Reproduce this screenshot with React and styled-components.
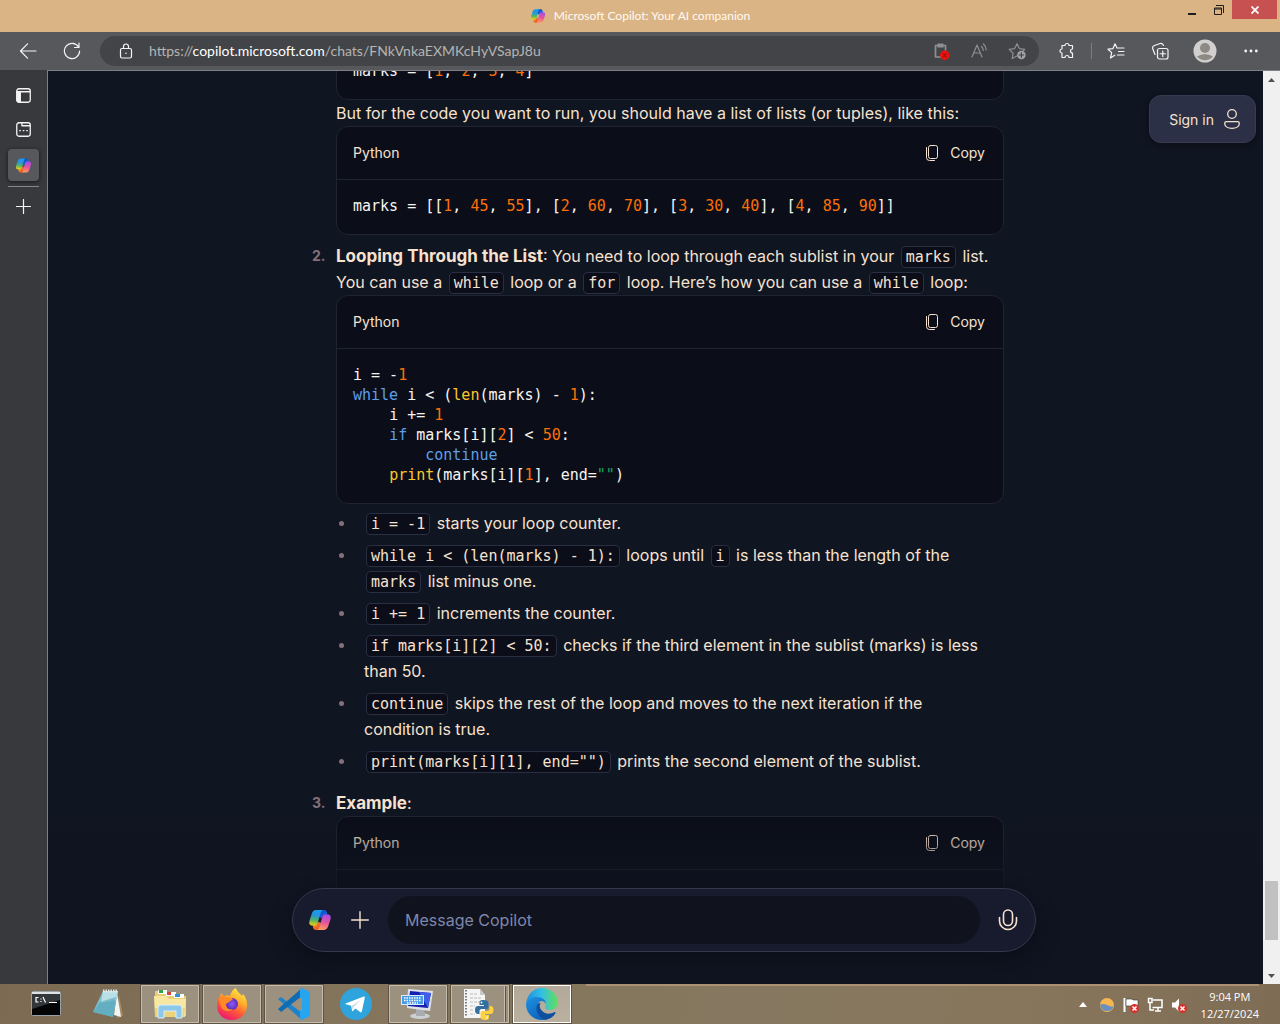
import React, { useId, useLayoutEffect, useRef } from "react";
import styled, { createGlobalStyle, css } from "styled-components";

const UI = `"Open Sans", "Noto Sans", sans-serif`;
const FRAME = `Lato, "Open Sans", sans-serif`;
const CHAT = `Inter, "Noto Sans", sans-serif`;
const MONO = `"DejaVu Sans Mono", "Liberation Mono", monospace`;

const Global = createGlobalStyle`
  *, *::before, *::after { box-sizing: border-box; }
  body { margin: 0; background: #0f1521; }
  button, input { font: inherit; color: inherit; border: 0; background: none; padding: 0; }
  ol, ul, p, pre { margin: 0; padding: 0; list-style: none; }
  svg { display: block; flex: none; }
`;

/* ---------- window frame ---------- */
const Desktop = styled.div`
  display: flex;
  flex-direction: column;
  height: 100vh;
  overflow: hidden;
  font-family: ${UI};
`;
const TitleBar = styled.header`
  display: grid;
  grid-template-columns: 1fr auto 1fr;
  height: 32px;
  background: #dbb486;
`;
const WindowTitle = styled.div`
  grid-column: 2;
  display: flex;
  align-items: center;
  gap: 8px;
  font: 12px/32px ${FRAME};
  color: #fffaf2;
`;
const WindowButtons = styled.div`
  display: flex;
  justify-content: flex-end;
  padding-right: 3px;
`;
const WindowButton = styled.button`
  display: grid;
  place-items: center;
  width: ${(p) => (p.$close ? 45 : 27)}px;
  height: 19px;
  background: ${(p) => (p.$close ? "#c75050" : "transparent")};
`;

/* ---------- browser toolbar ---------- */
const Toolbar = styled.nav`
  display: flex;
  align-items: center;
  height: 38px;
  padding: 0 6px;
  background: #56585c;
  color: #f4f4f4;
`;
const ToolButton = styled.button`
  display: grid;
  place-items: center;
  width: ${(p) => (p.$wide ? 46 : 44)}px;
  height: 30px;
`;
const ToolDivider = styled.span`
  width: 1px;
  height: 16px;
  margin: 0 2px;
  background: #7d7e82;
`;
const AddressBar = styled.div`
  display: flex;
  flex: 1;
  align-items: center;
  gap: 15px;
  min-width: 0;
  height: 30px;
  margin: 0 6px;
  padding: 0 13px 0 18px;
  border-radius: 15px;
  background: #434447;
`;
const Url = styled.div`
  flex: 1;
  min-width: 0;
  overflow: hidden;
  white-space: nowrap;
  font: 14px/20px ${FRAME};
  color: #b4b4b4;
  outline: none;
`;
const Host = styled.span`
  color: #fff;
`;
const AddressActions = styled.div`
  display: flex;
  gap: 20px;
  color: #8e8f91;
`;

/* ---------- page area ---------- */
const Main = styled.div`
  display: flex;
  flex: 1;
  min-height: 0;
`;
const Sidebar = styled.aside`
  display: flex;
  flex-direction: column;
  align-items: center;
  width: 47px;
  padding-top: 8px;
  background: #38393c;
  color: #f4f4f4;
`;
const SideButton = styled.button`
  display: grid;
  place-items: center;
  width: 31px;
  height: 34px;
  ${(p) =>
    p.$active &&
    css`
      height: 32px;
      margin: 3px 0 5px;
      border-radius: 4px;
      background: #56585c;
      box-shadow: 0 1px 4px #0009;
    `}
`;
const SideDivider = styled.span`
  width: 31px;
  height: 1px;
  margin-bottom: 2px;
  background: #85868a;
`;
const Page = styled.div`
  display: flex;
  flex: 1;
  min-width: 0;
  border: solid #7d7f83;
  border-width: 1px 0 0 1px;
  background: #0f1521;
`;
const ChatArea = styled.main`
  position: relative;
  flex: 1;
  min-width: 0;
  color: #f7e2d0;
  font-family: ${CHAT};
`;
const Scroller = styled.div`
  height: 100%;
  padding-left: 17px;
  overflow-y: auto;
  scrollbar-width: none;
`;
const Column = styled.ol`
  display: flex;
  flex-direction: column;
  gap: 8px;
  max-width: 744px;
  margin: 0 auto;
  padding: 0 32px 200px 20px;
  font-size: 16px;
  line-height: 26px;
`;
const Item = styled.li`
  display: grid;
  grid-template-columns: 24px minmax(0, 1fr);
`;
const Marker = styled.span`
  font-size: 14px;
  font-weight: 700;
  color: #85707a;
`;
const Strong = styled.strong`
  font-size: 17px;
  font-weight: 700;
  line-height: 1;
`;
const Code = styled.code`
  margin: 0 2px;
  padding: 1px 4px;
  border: 1px solid #2a2e42;
  border-radius: 4px;
  background: #0b0e19;
  font: 15px/1 ${MONO};
`;
const Bullets = styled.ul`
  display: flex;
  flex-direction: column;
  gap: 6px;
  padding: 6px 0 8px;
`;
const Bullet = styled.li`
  display: grid;
  grid-template-columns: 28px minmax(0, 1fr);
  padding-right: 16px;
  &::before {
    content: "";
    width: 5px;
    height: 5px;
    margin: 11px 3px 0;
    border-radius: 50%;
    background: #85707a;
  }
`;

const Block = styled.section`
  border: 1px solid #1f2332;
  border-radius: 12px;
  background: #0b0e19;
`;
const BlockHead = styled.div`
  display: flex;
  align-items: center;
  justify-content: space-between;
  height: 53px;
  padding: 0 18px 0 16px;
  border-bottom: 1px solid #1f2332;
  font-size: 14px;
`;
const CopyButton = styled.button`
  display: flex;
  align-items: center;
  gap: 10px;
`;
const Pre = styled.pre`
  min-height: 54px;
  padding: 16px 16px 18px;
  font: 15px/20px ${MONO};
  color: #f8f5f0;
`;
const tokenColors = { num: "#fb7008", key: "#5f9fe6", fn: "#fdc62e", str: "#1aa35c" };
const Token = styled.span`
  color: ${(p) => tokenColors[p.$kind]};
`;

const SignIn = styled.button`
  position: absolute;
  top: 24px;
  right: 7px;
  display: flex;
  align-items: center;
  gap: 10px;
  height: 48px;
  padding: 0 15px 0 19px;
  border: 1px solid #363b52;
  border-radius: 12px;
  background: #2b3047;
  box-shadow: 0 2px 6px #0005;
  font-size: 14px;
`;
const ComposerDock = styled.div`
  position: absolute;
  inset: auto 0 0 0;
  display: flex;
  justify-content: center;
  padding: 72px 0 32px 17px;
  background: linear-gradient(#0f142000, #0f1420 96px);
`;
const Composer = styled.form`
  display: flex;
  align-items: center;
  gap: 8px;
  width: 100%;
  max-width: 744px;
  height: 64px;
  padding: 7px 7px 7px 15px;
  border: 1px solid #333749;
  border-radius: 32px;
  background: #171b2d;
  box-shadow: 0 8px 20px #0a0c1499;
`;
const ComposerButton = styled.button`
  display: grid;
  place-items: center;
  width: ${(p) => (p.$logo ? 24 : 40)}px;
  height: 40px;
`;
const MessageInput = styled.input`
  flex: 1;
  min-width: 0;
  height: 48px;
  padding: 0 17px;
  border-radius: 24px;
  background: #10131e;
  font-size: 16px;
  &::placeholder {
    color: #7f86ab;
    opacity: 1;
  }
`;

/* ---------- scrollbar ---------- */
const ScrollBar = styled.div`
  display: flex;
  flex-direction: column;
  width: 17px;
  background: #f0f0f0;
`;
const ScrollArrow = styled.button`
  display: grid;
  place-items: center;
  height: 17px;
`;
const Track = styled.div`
  display: flex;
  flex: 1;
  align-items: flex-end;
  padding: 0 2px 27px;
`;
const Thumb = styled.div`
  flex: 1;
  height: 59px;
  background: #c1c1c1;
`;

/* ---------- taskbar ---------- */
const TaskBar = styled.footer`
  display: flex;
  align-items: stretch;
  height: 40px;
  padding: 1px 21px 1px 17px;
  background: linear-gradient(100deg, #7c6a52 0%, #84755c 30%, #867860 60%, #87765c 80%, #7f6c55 100%);
  color: #fff;
`;
const Apps = styled.div`
  display: flex;
  gap: 4px;
`;
const AppButton = styled.button`
  display: grid;
  place-items: center;
  width: 58px;
  ${(p) =>
    p.$open &&
    css`
      border: 1px solid #c4bcac;
      background: #9c907e;
      outline: 1px solid #5f5443;
      outline-offset: 0;
    `}
  ${(p) =>
    p.$active &&
    css`
      border-color: #fff;
      background: linear-gradient(#b3a99a, #b9b0a0);
    `}
  ${(p) =>
    p.$stacked &&
    css`
      background: linear-gradient(90deg, #9c907e 52px, #c4bcac 52px 53px, #5f5443 53px 54px, #9c907e 54px);
      padding-right: 4px;
    `}
`;
const Tray = styled.div`
  display: flex;
  flex: 1;
  align-items: center;
  justify-content: flex-end;
  gap: 8px;
  margin: -1px 0 0 15px;
  border-top: 2px solid #ab9073;
`;
const TrayButton = styled.button`
  display: grid;
  place-items: center;
  width: 16px;
  height: 16px;
`;
const Clock = styled.time`
  padding-left: 6px;
  text-align: center;
  font-size: 11px;
  line-height: 17px;
`;

/* ---------- drawings ---------- */
const stroke = { fill: "none", stroke: "currentColor", strokeWidth: 1.2, strokeLinecap: "round", strokeLinejoin: "round" };
const Line = ({ size = 18, box = 18, children, ...rest }) => (
  <svg width={size} height={size} viewBox={`0 0 ${box} ${box}`} {...stroke} {...rest} aria-hidden="true">
    {children}
  </svg>
);

function CopilotLogo({ size }) {
  const id = useId();
  return (
    <svg width={size} height={size} viewBox="0 0 24 24" aria-hidden="true">
      <defs>
        <linearGradient id={id + "a"} x1="0.4" y1="0" x2="0.3" y2="1">
          <stop offset="0" stopColor="#159cf0" />
          <stop offset="0.35" stopColor="#2b93d8" />
          <stop offset="0.65" stopColor="#4fb56b" />
          <stop offset="1" stopColor="#f2cc10" />
        </linearGradient>
        <linearGradient id={id + "b"} x1="0.6" y1="0" x2="0.4" y2="1">
          <stop offset="0" stopColor="#a44bea" />
          <stop offset="0.5" stopColor="#e5559c" />
          <stop offset="1" stopColor="#ff9a5c" />
        </linearGradient>
        <linearGradient id={id + "c"} x1="0" y1="0" x2="1" y2="1">
          <stop offset="0" stopColor="#0a3fc0" />
          <stop offset="1" stopColor="#1b7ae8" />
        </linearGradient>
        <linearGradient id={id + "d"} x1="0" y1="0" x2="1" y2="1">
          <stop offset="0" stopColor="#f7a325" />
          <stop offset="1" stopColor="#e8402c" />
        </linearGradient>
      </defs>
      <path d="M12 2h4.300c1.500 0 2.100.9 2.500 2.200l.9 3.800h-3.200c-1.500 0-2.300.8-2.800 2.300L11 9z" fill={`url(#${id}c)`} />
      <path d="M12 22H7.700c-1.500 0-2.100-.9-2.500-2.200L4.300 16h3.200c1.500 0 2.300-.8 2.800-2.300L13 15z" fill={`url(#${id}d)`} />
      <path d="M15 2H8C5.600 2 4.500 3.600 3.700 5.900L1.600 12.400C.6 15.600 1.700 17.500 4.500 17.500h2.500c1.500 0 2.200-1 2.700-2.600L12.500 5.500C13 3.600 13.700 2.300 15 2z" fill={`url(#${id}a)`} />
      <path d="M9 22H16c2.400 0 3.500-1.600 4.300-3.900l2.100-6.500c1-3.200-.1-5.100-2.900-5.100h-2.500c-1.500 0-2.200 1-2.700 2.600L11.500 18.500C11 20.400 10.300 21.700 9 22z" fill={`url(#${id}b)`} />
    </svg>
  );
}

const CopyIcon = () => (
  <Line size={16} box={16} strokeWidth="1">
    <rect x="4.500" y="0.500" width="9" height="13" rx="2" />
    <path d="M2.500 2.500v10a3 3 0 0 0 3 3h5" />
  </Line>
);

const CmdIcon = () => (
  <svg width="30" height="26" viewBox="0 0 30 26" aria-hidden="true">
    <rect x="0.500" y="0.500" width="29" height="24" rx="1" fill="#050505" stroke="#98a0a8" />
    <path d="M1 1h28v2H1z" fill="#dce2e6" />
    <path d="M1 3h28v6L1 18z" fill="#33373a" />
    <path d="M7.500 6.500H5v4.500h2.500M10 7.500v1M10 10v1M12 6l2.500 5.500M18 11.500h8" stroke="#fff" strokeWidth="1.200" fill="none" />
  </svg>
);
const NotepadIcon = () => (
  <svg width="32" height="32" viewBox="0 0 32 32" aria-hidden="true">
    <path d="M27 7l4 21-6 2z" fill="#a88c5c" />
    <path d="M25 5l4 24-7-2z" fill="#f0f5f7" />
    <path d="M11 3h15l-5 26-20-5z" fill="#7fc1cf" />
    <path d="M11 3h15l-2 9-15 3z" fill="#b9e0e6" />
    <path d="M8 14l16-5-3 20-20-5z" fill="#4c9fb4" opacity=".55" />
    <path d="M11 3h15" stroke="#e3eaec" strokeWidth="3" strokeDasharray="1.500 1" />
  </svg>
);
const FolderIcon = () => (
  <svg width="34" height="32" viewBox="0 0 34 32" aria-hidden="true">
    <path d="M2 3h10l2 3h11l1 2h7v20H2z" fill="#e9cf73" />
    <path d="M5 2h9v4H5z" fill="#fff" />
    <path d="M6 2h4v3H6z" fill="#27a844" />
    <path d="M13 4h10v4H13z" fill="#fff" />
    <path d="M14 4h4v3h-4z" fill="#d54536" />
    <path d="M21 6h10v4H21z" fill="#fff" />
    <path d="M22 6h5v3h-5z" fill="#2f8fd8" />
    <path d="M1 8h12l3 3h17l-1 18H2z" fill="#f8e7a0" />
    <path d="M2 20h30l-1 9H2z" fill="#ecd27a" />
    <path d="M5 30V20q0-3 3-3h18q3 0 3 3v10h-6v-7H11v7z" fill="#8cc8ea" stroke="#d8effa" />
  </svg>
);
function FirefoxIcon() {
  return (
    <svg width="32" height="32" viewBox="0 0 32 32" aria-hidden="true">
      <defs>
        <linearGradient id="ff1" x1="0.800" y1="0" x2="0.300" y2="1">
          <stop offset="0" stopColor="#fff04a" />
          <stop offset="0.350" stopColor="#ffb12c" />
          <stop offset="0.650" stopColor="#ff5a35" />
          <stop offset="1" stopColor="#ed1374" />
        </linearGradient>
        <radialGradient id="ff2">
          <stop offset="0" stopColor="#8f5cf0" />
          <stop offset="1" stopColor="#5b2bc0" />
        </radialGradient>
      </defs>
      <path d="M20 0c1 4 4 5 6 8l1-2c3 3 4 7 4 11 0 8-6 15-15 15S1 26 1 17c0-4 1-7 3-9l1-3 3 3c2-1 4-1 6 0 1-4 3-7 6-8z" fill="url(#ff1)" />
      <circle cx="16" cy="16" r="6" fill="url(#ff2)" />
      <path d="M3 11c2-3 5-3 8-1 2-1 5-1 6 2-2 0-3 1-4 2s-2 1-3 2c-1 4 3 6 7 5-4 4-11 2-12-3-1-3-2-5-2-7z" fill="#ff8a25" />
    </svg>
  );
}
const CodeIcon = () => (
  <svg width="32" height="32" viewBox="0 0 32 32" aria-hidden="true">
    <path d="M0 11l3-2 21 16v7z" fill="#1b83cc" />
    <path d="M0 21l3 3L24 8V0z" fill="#0d6cb2" />
    <path d="M24 0l8 4v24l-8 4-2-1V1z" fill="#27a5f0" />
    <path d="M24 9v14l-9-7z" fill="#9c907e" />
  </svg>
);
const TelegramIcon = () => (
  <svg width="32" height="32" viewBox="0 0 32 32" aria-hidden="true">
    <circle cx="16" cy="16" r="16" fill="#2fa3dc" />
    <path d="M5.500 15.500L23.800 8.500q1.200-.3 1 1.200l-3 13.800q-.4 1.400-1.700.6l-4.700-3.500-2.500 2.400q-.8.600-.9-.5l-.8-4.700-5.300-1.600q-1-.4-.4-.7z" fill="#fff" />
    <path d="M11.500 18l9.500-6.300-7.500 7.300-.4 3.800z" fill="#c4dcea" />
  </svg>
);
const ComputerIcon = () => (
  <svg width="34" height="32" viewBox="0 0 34 32" aria-hidden="true">
    <ellipse cx="19" cy="28" rx="10" ry="3" fill="#cdd0d3" />
    <path d="M15 20h8l1 8h-9z" fill="#a9adb2" />
    <path d="M7 1l25 2-3 20-23-3z" fill="#dfe3e8" />
    <path d="M9 3l21 2-3 15-20-2z" fill="#1520b0" />
    <path d="M18 4l12 1-3 15z" fill="#3f5fe8" />
    <rect x="0.500" y="7.500" width="22" height="9" fill="#4a9be8" stroke="#d6ebfc" />
    <path d="M3 10h17M3 12.500h17M6 15h11" stroke="#fff" strokeWidth="1.300" strokeDasharray="1.500 1" />
  </svg>
);
const PythonIcon = () => (
  <svg width="32" height="32" viewBox="0 0 32 32" aria-hidden="true">
    <path d="M2 1h16l5 6v23H2z" fill="#f5f5f5" />
    <path d="M18 1v6h5z" fill="#c8c8c8" />
    <path d="M4 2v27" stroke="#555" strokeWidth="1.500" strokeDasharray="1.500 1.500" />
    <path d="M8 6h8M8 10h12M8 14h12M8 18h5M8 22h4M8 26h5" stroke="#bbb" strokeDasharray="3 1" />
    <path d="M21.500 12c-4 0-4 1.500-4 3v2h4.500v1h-6c-2 0-3 1.500-3 4s1 4 3 4h1.500v-2.500c0-2 1-2.500 3-2.500h4c1.500 0 2-1 2-2v-4c0-2-1.500-3-5-3z" fill="#34709f" />
    <path d="M23 32c4 0 4-1.500 4-3v-2h-4.500v-1h6c2 0 3-1.500 3-4s-1-4-3-4h-1v2.500c0 2-1 2.500-3 2.500h-4c-1.500 0-2 1-2 2v4c0 2 1.500 3 4.500 3z" fill="#ffd13e" />
    <circle cx="19.500" cy="14.500" r=".9" fill="#fff" />
    <circle cx="25" cy="29.500" r=".9" fill="#fff" />
  </svg>
);
function EdgeIcon() {
  return (
    <svg width="32" height="32" viewBox="0 0 32 32" aria-hidden="true">
      <defs>
        <linearGradient id="ed1" x1="0" y1="0.500" x2="1" y2="0.500">
          <stop offset="0" stopColor="#1d8fe0" />
          <stop offset="0.500" stopColor="#33c1e4" />
          <stop offset="1" stopColor="#62e052" />
        </linearGradient>
        <linearGradient id="ed2" x1="0" y1="0" x2="0.500" y2="1">
          <stop offset="0" stopColor="#2191e0" />
          <stop offset="1" stopColor="#0b67c0" />
        </linearGradient>
      </defs>
      <path d="M0 16C1 6 8 0 16 0c9 0 16 7 16 14 0 5-4 8-8 8-3 0-5-1-5-2s1-2 1-4c0-3-4-6-9-6C6 10 1 12 0 16z" fill="url(#ed1)" />
      <path d="M0 16c1-5 6-7 11-7 5 0 9 3 9 7-1-2-3-3-4-3-4 0-5 5-5 8 0 6 5 11 9 11-1 0-3 0-4 0C7 32 0 25 0 16z" fill="url(#ed2)" />
      <path d="M11.500 16c-3 6 1 15 8 16 4-1 8-3 10-7 0-1 0-1-1-1-5 3-11 2-14-3-1-2-1-4 0-6-1 0-2 0-3 1z" fill="#0f4fa0" />
    </svg>
  );
}
const RedCross = () => (
  <g>
    <circle cx="11.500" cy="11.500" r="4.500" fill="#d8302a" />
    <path d="M9.500 9.500l4 4m0-4l-4 4" stroke="#fff" strokeWidth="1.500" />
  </g>
);

/* ---------- pieces ---------- */
function CodeBlock({ bare, children }) {
  return (
    <Block>
      {!bare && (
        <BlockHead>
          <span>Python</span>
          <CopyButton type="button">
            <CopyIcon />
            Copy
          </CopyButton>
        </BlockHead>
      )}
      <Pre>{children}</Pre>
    </Block>
  );
}
const N = ({ children }) => <Token $kind="num">{children}</Token>;
const K = ({ children }) => <Token $kind="key">{children}</Token>;
const F = ({ children }) => <Token $kind="fn">{children}</Token>;
const NumberList = ({ values }) => (
  <>
    [{values.map((v, i) => <React.Fragment key={v}>{i > 0 && ", "}<N>{v}</N></React.Fragment>)}]
  </>
);
const rows = [[1, 45, 55], [2, 60, 70], [3, 30, 40], [4, 85, 90]];

function Conversation() {
  const ref = useRef(null);
  useLayoutEffect(() => {
    ref.current.scrollTop = 27;
  }, []);
  return (
    <Scroller ref={ref}>
      <Column>
        <Item>
          <Marker />
          <div>
            <CodeBlock bare>marks = <NumberList values={[1, 2, 3, 4]} /></CodeBlock>
            <p>But for the code you want to run, you should have a list of lists (or tuples), like this:</p>
            <CodeBlock>
              marks = [{rows.map((r, i) => <React.Fragment key={i}>{i > 0 && ", "}<NumberList values={r} /></React.Fragment>)}]
            </CodeBlock>
          </div>
        </Item>
        <Item>
          <Marker>2.</Marker>
          <div>
            <p>
              <Strong>Looping Through the List</Strong>: You need to loop through each sublist in your <Code>marks</Code> list.
              You can use a <Code>while</Code> loop or a <Code>for</Code> loop. Here’s how you can use a <Code>while</Code> loop:
            </p>
            <CodeBlock>
              i = -<N>1</N>{"\n"}
              <K>while</K> i &lt; (<F>len</F>(marks) - <N>1</N>):{"\n"}
              {"    "}i += <N>1</N>{"\n"}
              {"    "}<K>if</K> marks[i][<N>2</N>] &lt; <N>50</N>:{"\n"}
              {"        "}<K>continue</K>{"\n"}
              {"    "}<F>print</F>(marks[i][<N>1</N>], end=<Token $kind="str">""</Token>)
            </CodeBlock>
            <Bullets>
              <Bullet><p><Code>i = -1</Code> starts your loop counter.</p></Bullet>
              <Bullet><p><Code>while i &lt; (len(marks) - 1):</Code> loops until <Code>i</Code> is less than the length of the <Code>marks</Code> list minus one.</p></Bullet>
              <Bullet><p><Code>i += 1</Code> increments the counter.</p></Bullet>
              <Bullet><p><Code>if marks[i][2] &lt; 50:</Code> checks if the third element in the sublist (marks) is less than 50.</p></Bullet>
              <Bullet><p><Code>continue</Code> skips the rest of the loop and moves to the next iteration if the condition is true.</p></Bullet>
              <Bullet><p><Code>print(marks[i][1], end="")</Code> prints the second element of the sublist.</p></Bullet>
            </Bullets>
          </div>
        </Item>
        <Item>
          <Marker>3.</Marker>
          <div>
            <p><Strong>Example</Strong>:</p>
            <CodeBlock />
          </div>
        </Item>
      </Column>
    </Scroller>
  );
}

export default function App() {
  return (
    <Desktop>
      <Global />
      <TitleBar>
        <WindowTitle><CopilotLogo size={16} />Microsoft Copilot: Your AI companion</WindowTitle>
        <WindowButtons>
          <WindowButton aria-label="Minimize">
            <svg width="10" height="10"><path d="M1 8h8v2H1z" fill="#1e1e1e" /></svg>
          </WindowButton>
          <WindowButton aria-label="Restore">
            <svg width="10" height="10" fill="none" stroke="#1e1e1e"><path d="M2 .5h7.500v7.500M.5 3h7v6.500h-7zM.5 4h7" /></svg>
          </WindowButton>
          <WindowButton $close aria-label="Close">
            <svg width="8" height="8" stroke="#fff" strokeWidth="1.800"><path d="M.5.5l7 7m0-7l-7 7" /></svg>
          </WindowButton>
        </WindowButtons>
      </TitleBar>

      <Toolbar>
        <ToolButton aria-label="Back"><Line><path d="M17 9H1.500M8.500 1.800L1.500 9l7 7.200" /></Line></ToolButton>
        <ToolButton aria-label="Refresh"><Line><path d="M15.500 5A7.600 7.600 0 1 0 16.600 9M16 1v4.500h-4.500" /></Line></ToolButton>
        <AddressBar>
          <Line size={16} box={16}><rect x="2.500" y="5.500" width="11" height="9.500" rx="1.500" /><path d="M5.500 5.500V3.500a2.500 2.500 0 0 1 5 0v2" /><circle cx="8" cy="10.300" r=".8" fill="currentColor" stroke="none" /></Line>
          <Url role="textbox" aria-label="Address" contentEditable suppressContentEditableWarning spellCheck={false}>
            https://<Host>copilot.microsoft.com</Host>/chats/FNkVnkaEXMKcHyVSapJ8u
          </Url>
          <AddressActions>
            <button aria-label="Clipboard blocked">
              <Line>
                <path d="M6 3.500H3.500v11.500h6M11 3.500h2.500V8" strokeWidth="1.700" /><path d="M6 2h5v3H6z" fill="currentColor" />
                <circle cx="12.800" cy="13.300" r="4.700" fill="#f0100c" stroke="none" /><path d="M11.300 11.800l3 3m0-3l-3 3" stroke="#8a1512" />
              </Line>
            </button>
            <button aria-label="Read aloud">
              <Line><path d="M2 15L7 3l5 12M3.700 11h6.600M11.500 4.500q1.600 1.400 1.800 4M13.500 2q2.600 2.200 2.800 6" /></Line>
            </button>
            <button aria-label="Add to favorites">
              <Line>
                <path d="M9 14l-4.800 2.500.9-5.300L1.200 7.400l5.400-.8L9 1.700l2.400 4.900 5.400.8-1.500 1.400" />
                <circle cx="13.400" cy="13" r="4.300" fill="#a2a2a3" stroke="none" /><path d="M13.400 10.800v4.400M11.200 13h4.400" stroke="#434447" />
              </Line>
            </button>
          </AddressActions>
        </AddressBar>
        <ToolButton aria-label="Extensions">
          <Line><path d="M4 3.500h3a2 2 0 0 1 4 0h3.500V7a2 2 0 1 0 0 4v4.500H11a2 2 0 0 0-4 0H4V11a2 2 0 0 1 0-4z" /></Line>
        </ToolButton>
        <ToolDivider />
        <ToolButton aria-label="Favorites">
          <Line><path d="M7.800 13.200L3.500 16l1.200-5.400L1 7.200l5-.6L8 1.800l2 4.300M11 6h6M11.500 9.500H17M10.500 13H17" /></Line>
        </ToolButton>
        <ToolButton aria-label="Collections">
          <Line><rect x="6.500" y="6.500" width="10.500" height="10.500" rx="2" /><path d="M11.750 9v5.500M9 11.750h5.500M4 12.500L2 7.500Q.8 4.500 3.500 3.500L9 1.500q2.500-.8 3.500 2" /></Line>
        </ToolButton>
        <ToolButton $wide aria-label="Profile">
          <svg width="24" height="24" viewBox="0 0 24 24">
            <circle cx="12" cy="12" r="11.500" fill="#d2d0ce" />
            <circle cx="12" cy="9" r="5" fill="#8d8984" />
            <path d="M4 17.500q8-5 16 0a10.500 10.500 0 0 1-16 0z" fill="#8d8984" />
          </svg>
        </ToolButton>
        <ToolButton $wide aria-label="Settings and more">
          <svg width="14" height="4" fill="#f4f4f4"><circle cx="1.700" cy="2" r="1.400" /><circle cx="7" cy="2" r="1.400" /><circle cx="12.300" cy="2" r="1.400" /></svg>
        </ToolButton>
      </Toolbar>

      <Main>
        <Sidebar>
          <SideButton aria-label="Vertical tabs">
            <Line size={15} box={14}><rect x=".7" y=".7" width="12.600" height="12.600" rx="2" /><path d="M1 3.500h12" /><path d="M1 3.500h3v9.500H2L1 12z" fill="currentColor" /></Line>
          </SideButton>
          <SideButton aria-label="Workspaces">
            <Line size={15} box={14}><rect x=".7" y=".7" width="12.600" height="12.600" rx="2" /><path d="M5.500 1v2.500H13M3.500 8h.6M6.800 8h.6M10 8h.6" /></Line>
          </SideButton>
          <SideButton $active aria-label="Copilot"><CopilotLogo size={17} /></SideButton>
          <SideDivider />
          <SideButton aria-label="Add site"><Line size={15} box={15}><path d="M7.500.5v14M.5 7.500h14" /></Line></SideButton>
        </Sidebar>
        <Page>
          <ChatArea>
            <Conversation />
            <SignIn type="button">
              Sign in
              <svg width="16" height="20" viewBox="0 0 16 20" fill="none" stroke="currentColor" strokeWidth="1.300">
                <circle cx="8" cy="5" r="4.300" />
                <path d="M2.500 12.700h11q1.800 0 1.800 1.700c0 3-3.300 4.900-7.300 4.900S.7 17.400.7 14.400q0-1.700 1.800-1.700z" />
              </svg>
            </SignIn>
            <ComposerDock>
              <Composer onSubmit={(e) => e.preventDefault()}>
                <ComposerButton $logo type="button" aria-label="Copilot home"><CopilotLogo size={24} /></ComposerButton>
                <ComposerButton type="button" aria-label="Add attachment">
                  <Line><path d="M9 .7v16.600M.7 9h16.600" strokeWidth="1.400" /></Line>
                </ComposerButton>
                <MessageInput aria-label="Message Copilot" placeholder="Message Copilot" />
                <ComposerButton type="button" aria-label="Speak">
                  <svg width="20" height="22" viewBox="0 0 20 22" fill="none" stroke="currentColor" strokeWidth="1.600" strokeLinecap="round">
                    <rect x="5.500" y="1" width="9" height="15.500" rx="4.500" />
                    <path d="M1.500 8.500V12a8.500 8.500 0 0 0 17 0V8.500" />
                  </svg>
                </ComposerButton>
              </Composer>
            </ComposerDock>
          </ChatArea>
          <ScrollBar>
            <ScrollArrow aria-label="Scroll up"><svg width="7" height="4"><path d="M0 4l3.500-4L7 4z" fill="#505050" /></svg></ScrollArrow>
            <Track><Thumb /></Track>
            <ScrollArrow aria-label="Scroll down"><svg width="7" height="4"><path d="M0 0l3.500 4L7 0z" fill="#505050" /></svg></ScrollArrow>
          </ScrollBar>
        </Page>
      </Main>

      <TaskBar>
        <Apps>
          <AppButton aria-label="Command Prompt"><CmdIcon /></AppButton>
          <AppButton aria-label="Notepad"><NotepadIcon /></AppButton>
          <AppButton $open aria-label="File Explorer"><FolderIcon /></AppButton>
          <AppButton $open aria-label="Firefox"><FirefoxIcon /></AppButton>
          <AppButton $open aria-label="Visual Studio Code"><CodeIcon /></AppButton>
          <AppButton aria-label="Telegram"><TelegramIcon /></AppButton>
          <AppButton $open aria-label="On-screen keyboard"><ComputerIcon /></AppButton>
          <AppButton $open $stacked aria-label="Python"><PythonIcon /></AppButton>
          <AppButton $open $active aria-label="Microsoft Edge"><EdgeIcon /></AppButton>
        </Apps>
        <Tray>
          <TrayButton aria-label="Show hidden icons"><svg width="8" height="5"><path d="M0 5l4-5 4 5z" fill="#fff" /></svg></TrayButton>
          <TrayButton aria-label="Weather">
            <svg width="16" height="16"><circle cx="8" cy="8" r="7" fill="#f7b750" /><path d="M1 8q3-2 7 0 4 2 6.500 1.500A7 7 0 0 1 1 8z" fill="#6d8fbe" /></svg>
          </TrayButton>
          <TrayButton aria-label="Action center">
            <svg width="16" height="16"><path d="M1.500 1v14" stroke="#fff" strokeWidth="2" /><path d="M3 2h6l1 1h5v7H9L8 9H3z" fill="#fff" stroke="#333" strokeWidth=".6" /><RedCross /></svg>
          </TrayButton>
          <TrayButton aria-label="Network">
            <svg width="16" height="16" fill="none" stroke="#fff" strokeWidth="1.500"><path d="M6 3h9v7.500H5.500M8 14h6M11 10.500V14M3 6v7h4M1.500 1.500h3.500v4H1.500z" /></svg>
          </TrayButton>
          <TrayButton aria-label="Volume muted">
            <svg width="16" height="16"><path d="M1 5.500h3l4-4v13l-4-4H1z" fill="#fff" /><RedCross /></svg>
          </TrayButton>
          <Clock>9:04 PM<br />12/27/2024</Clock>
        </Tray>
      </TaskBar>
    </Desktop>
  );
}
